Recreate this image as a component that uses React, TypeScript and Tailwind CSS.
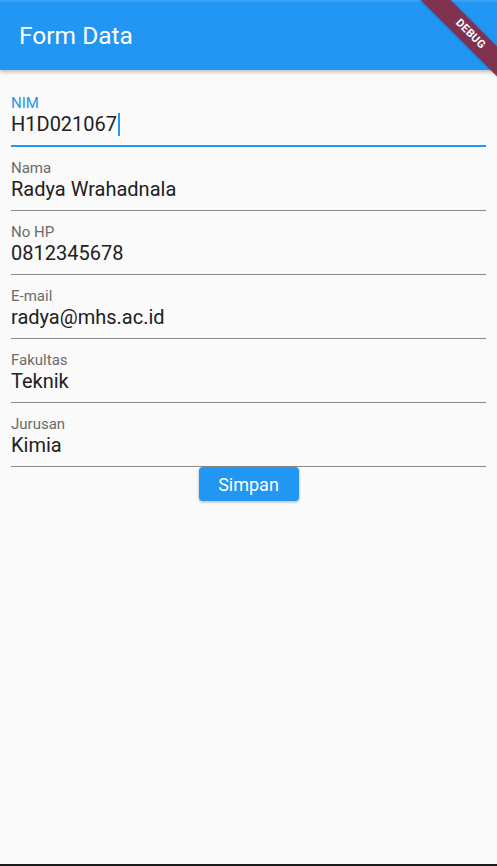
import React from 'react';

const fields = [
  { label: 'NIM', value: 'H1D021067', focused: true },
  { label: 'Nama', value: 'Radya Wrahadnala' },
  { label: 'No HP', value: '0812345678' },
  { label: 'E-mail', value: 'radya@mhs.ac.id' },
  { label: 'Fakultas', value: 'Teknik' },
  { label: 'Jurusan', value: 'Kimia' },
];

function Field({ label, value, focused }: { label: string; value: string; focused?: boolean }) {
  return (
    <div
      className={
        focused
          ? 'pt-[13px] pb-[9px] border-b-2 border-[#2196f3]'
          : 'pt-[13px] pb-[9px] border-b border-[#8a8a8a]'
      }
    >
      <div className={focused ? 'text-[15px] leading-[17px] text-[#2196f3]' : 'text-[15px] leading-[17px] text-[#6b6b6b]'}>
        {label}
      </div>
      <div className="flex items-center text-[20px] leading-[24px] text-[#212121]">
        <span>{value}</span>
        {focused && <span className="ml-[1px] inline-block w-[2px] h-[23px] bg-[#2196f3]" />}
      </div>
    </div>
  );
}

export default function App() {
  return (
    <div className="relative w-[497px] h-[866px] overflow-hidden bg-[#fafafa] border-b-2 border-[#1a1a1a]" style={{ fontFamily: 'Roboto, "Noto Sans", sans-serif' }}>
      <header className="h-[70px] bg-[#2196f3] flex items-center pl-[19px] shadow-[0_2px_4px_rgba(0,0,0,0.25)] border-t-2 border-[#3aa1f5]">
        <h1 className="text-[24.5px] text-white">Form Data</h1>
      </header>

      <div className="px-[11px] pt-[12px] flex flex-col">
        {fields.map((f) => (
          <Field key={f.label} {...f} />
        ))}
        <div className="flex justify-center">
          <button className="w-[100px] h-[34px] rounded-[4px] bg-[#2196f3] text-white text-[18px] shadow-[0_1px_3px_rgba(0,0,0,0.3)]">
            Simpan
          </button>
        </div>
      </div>

      <div className="absolute left-[410px] top-[24px] w-[120px] h-[21px] rotate-45 bg-[#7f3350] flex items-center justify-center shadow-[0_0_3px_rgba(0,0,0,0.3)]">
        <span className="text-white text-[11px] font-bold tracking-[0.3px]">DEBUG</span>
      </div>
    </div>
  );
}
